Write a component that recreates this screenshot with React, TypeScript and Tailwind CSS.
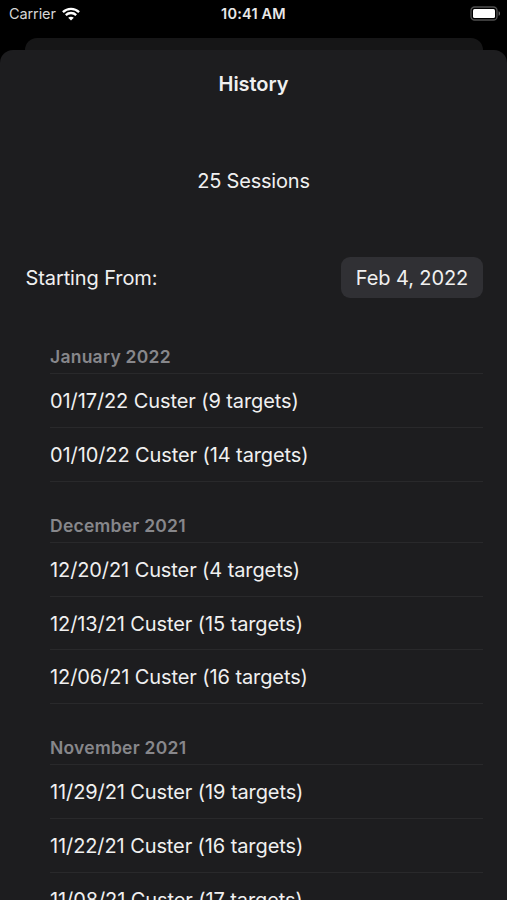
interface Session {
  date: string;
  location: string;
  targets: number;
}

interface Month {
  title: string;
  sessions: Session[];
}

const months: Month[] = [
  {
    title: "January 2022",
    sessions: [
      { date: "01/17/22", location: "Custer", targets: 9 },
      { date: "01/10/22", location: "Custer", targets: 14 },
    ],
  },
  {
    title: "December 2021",
    sessions: [
      { date: "12/20/21", location: "Custer", targets: 4 },
      { date: "12/13/21", location: "Custer", targets: 15 },
      { date: "12/06/21", location: "Custer", targets: 16 },
    ],
  },
  {
    title: "November 2021",
    sessions: [
      { date: "11/29/21", location: "Custer", targets: 19 },
      { date: "11/22/21", location: "Custer", targets: 16 },
      { date: "11/08/21", location: "Custer", targets: 17 },
    ],
  },
];

function WifiIcon() {
  return (
    <svg width="18" height="14" viewBox="0 0 18 14" fill="none" stroke="#fff" strokeWidth="2.3">
      <path d="M0.9 5.1C5.4 0.7 12.6 0.7 17.1 5.1" />
      <path d="M3.8 8.1C6.7 5.3 11.3 5.3 14.2 8.1" />
      <path d="M9 13.6L6.2 10.8C7.8 9.4 10.2 9.4 11.8 10.8Z" fill="#fff" stroke="none" />
    </svg>
  );
}

function BatteryIcon() {
  return (
    <svg width="31" height="15" viewBox="0 0 31 15" fill="none">
      <rect x="1" y="1" width="26" height="13" rx="3.6" stroke="#505050" strokeWidth="1.3" />
      <rect x="3" y="3" width="22" height="9" rx="1.5" fill="#fff" />
      <path d="M28.6 5.2C30.5 5.9 30.5 9.1 28.6 9.8Z" fill="#6a6a6a" />
    </svg>
  );
}

function StatusBar() {
  return (
    <div className="h-[38px] pt-[3px] px-2 grid grid-cols-3 items-start text-[14.5px] leading-[22px]">
      <div className="flex items-center gap-[6px] pl-px text-[#d6d6d6]">
        <span className="tracking-[-0.1px]">Carrier</span>
        <WifiIcon />
      </div>
      <span className="text-center font-semibold text-[#e8e8e8] tracking-[0.2px]">10:41 AM</span>
      <div className="flex justify-end pt-[3px] -mr-[2px]">
        <BatteryIcon />
      </div>
    </div>
  );
}

function MonthSection({ title, sessions }: Month) {
  return (
    <section className="pl-[50px] pr-6">
      <h2 className="h-[61.2px] pb-1 flex items-end border-b border-[#29292b] text-[17.5px] leading-6 font-semibold tracking-[0.25px] text-[#87878b]">
        {title}
      </h2>
      <ul>
        {sessions.map((session) => (
          <li
            key={session.date}
            className="h-[53.75px] pt-px flex items-center border-b border-[#29292b] text-[20px] tracking-[-0.1px] whitespace-nowrap"
          >
            {session.date} {session.location} ({session.targets} targets)
          </li>
        ))}
      </ul>
    </section>
  );
}

export default function App() {
  return (
    <div className="h-[900px] w-full overflow-hidden bg-black font-['Inter',sans-serif] text-[#f0f0f0]">
      <StatusBar />
      {/* Edge of the screen behind the sheet */}
      <div className="ml-[25px] mr-6 h-3 rounded-t-[12px] bg-[#161617]" />
      <main className="h-[850px] overflow-hidden rounded-t-[13px] bg-[#1d1d1f]">
        <h1 className="h-[68px] flex items-center justify-center text-[20px] font-semibold tracking-[-0.05px]">
          History
        </h1>
        <p className="mt-[47px] h-8 flex items-center justify-center text-[20px] tracking-[-0.2px]">25 Sessions</p>
        <div className="mt-[60px] h-[41px] px-6 flex items-center justify-between text-[20px] tracking-[-0.1px]">
          <span className="pl-[1.5px]">Starting From:</span>
          <button className="h-[41px] w-[142px] rounded-[9px] bg-[#303034] pt-px text-center whitespace-nowrap">
            Feb 4, 2022
          </button>
        </div>
        <div className="mt-[15px]">
          {months.map((month) => (
            <MonthSection key={month.title} {...month} />
          ))}
        </div>
      </main>
    </div>
  );
}
